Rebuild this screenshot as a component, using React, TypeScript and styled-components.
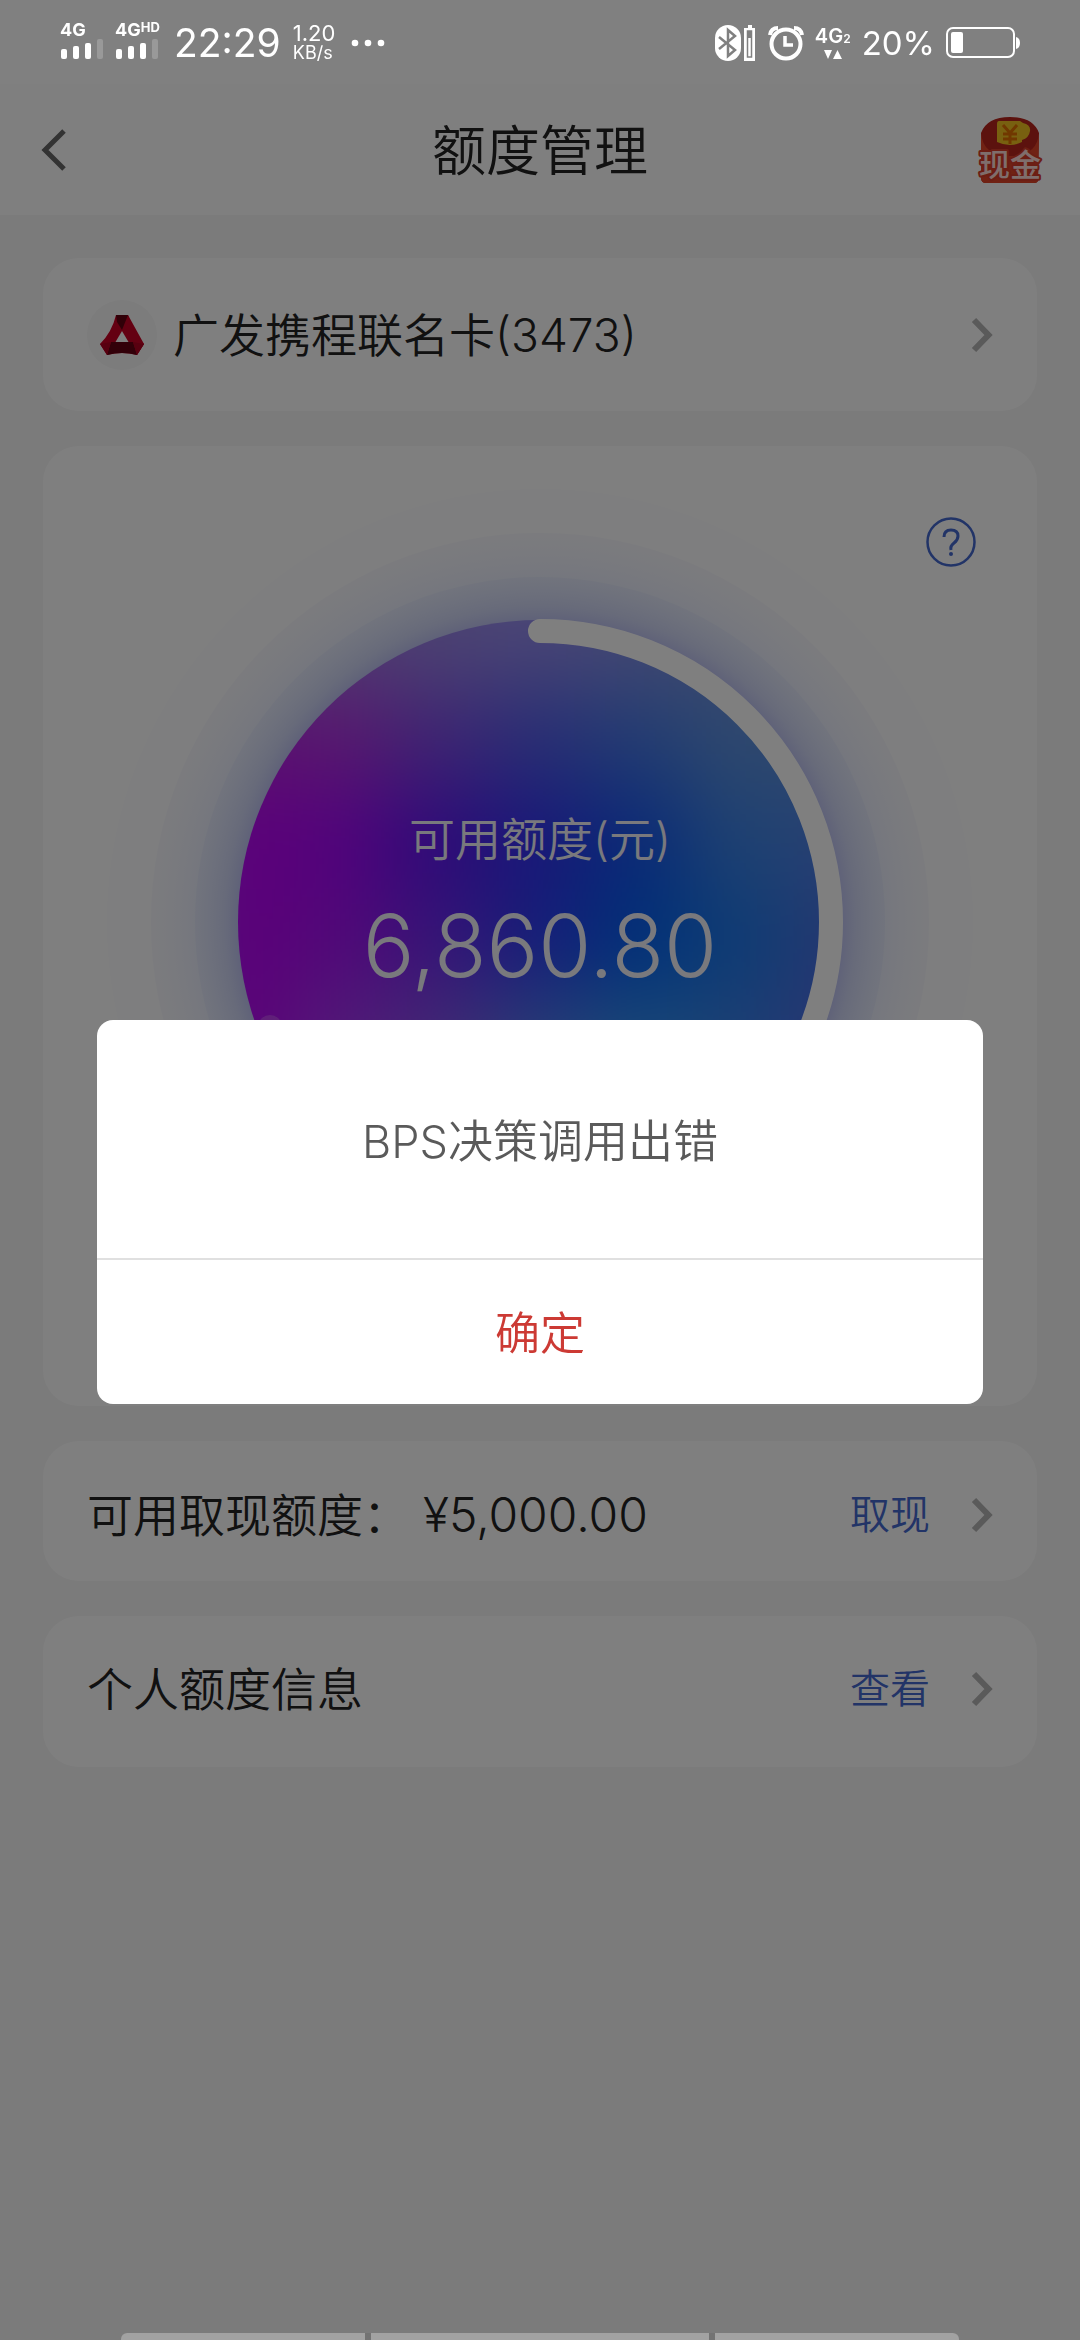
import React from 'react';
import styled, { createGlobalStyle } from 'styled-components';

const GlobalStyle = createGlobalStyle`
  *, *::before, *::after { box-sizing: border-box; }
  body {
    margin: 0;
    background: #f7f7f7;
    font-family: Inter, 'Noto Sans CJK SC', sans-serif;
    font-weight: 350;
    color: #222;
  }
  button {
    margin: 0;
    padding: 0;
    border: 0;
    background: none;
    font: inherit;
    color: inherit;
    cursor: pointer;
  }
  h1, p { margin: 0; font-weight: inherit; }
  svg { display: block; flex: none; }
`;

const STATUS_HEIGHT = '84px';

const Page = styled.div`
  min-height: 100vh;
  display: flex;
  flex-direction: column;
  padding-top: ${STATUS_HEIGHT};
`;

const StatusBar = styled.div`
  position: fixed;
  inset: 0 0 auto 0;
  z-index: 3;
  height: ${STATUS_HEIGHT};
  padding: 2px 60px 0;
  display: flex;
  align-items: center;
  justify-content: space-between;
  background: #808080;
  color: #fff;
  font-weight: 400;
`;

const StatusGroup = styled.div<{ $gap: number }>`
  display: flex;
  align-items: center;
  gap: ${(p) => p.$gap}px;
`;

const Signal = styled.div<{ $width: number }>`
  width: ${(p) => p.$width}px;
  padding-bottom: 6px;
`;

const SignalType = styled.div`
  display: flex;
  align-items: flex-start;
  font-size: 18px;
  line-height: 18px;
  font-weight: 700;
  small { font-size: 13px; line-height: 13px; }
`;

const Clock = styled.time`
  font-size: 39px;
  line-height: 48px;
`;

const Speed = styled.div`
  display: flex;
  flex-direction: column;
  font-size: 22px;
  line-height: 20px;
  small { font-size: 18px; line-height: 20px; }
`;

const DataType = styled.div`
  display: flex;
  flex-direction: column;
  align-items: center;
  gap: 4px;
  font-size: 20px;
  line-height: 20px;
  font-weight: 600;
  sub { font-size: 12px; line-height: 12px; vertical-align: 0; }
`;

const Percent = styled.span`
  font-size: 33px;
  line-height: 40px;
`;

const Header = styled.header`
  display: grid;
  grid-template-columns: 80px 1fr 80px;
  align-items: center;
  height: 131px;
  padding: 0 36px;
  background: #fff;
`;

const Title = styled.h1`
  padding-top: 4px;
  text-align: center;
  font-size: 54px;
  line-height: 64px;
`;

const HeaderButton = styled.button<{ $end?: boolean }>`
  display: flex;
  align-items: center;
  justify-content: ${(p) => (p.$end ? 'flex-end' : 'flex-start')};
  height: 80px;
`;

const Main = styled.main`
  display: flex;
  flex-direction: column;
  gap: 35px;
  padding: 43px;
`;

const RowCard = styled.button<{ $height: number; $padding: string }>`
  display: flex;
  align-items: center;
  min-height: ${(p) => p.$height}px;
  padding: ${(p) => p.$padding};
  border-radius: 36px;
  background: #fff;
  text-align: left;
  font-size: 46px;
  line-height: 56px;
`;

const BankLogo = styled.span`
  display: grid;
  place-items: center;
  width: 70px;
  height: 70px;
  margin-right: 16px;
  border-radius: 50%;
  background: #f8f8f8;
`;

const RowLabel = styled.span`
  flex: 1;
  display: flex;
  gap: 14px;
`;

const Amount = styled.span`
  font-size: 48px;
`;

const RowAction = styled.span`
  margin-right: 41px;
  font-size: 40px;
  line-height: 48px;
  color: #4468cf;
`;

const Panel = styled.section`
  position: relative;
  display: flex;
  justify-content: center;
  padding: 43px 0 51px;
  border-radius: 36px;
  background: #fff;
`;

const HelpButton = styled.button`
  position: absolute;
  top: 71px;
  right: 61px;
`;

const Gauge = styled.div`
  display: grid;
  > * { grid-area: 1 / 1; }
`;

const GaugeText = styled.div`
  display: flex;
  flex-direction: column;
  align-items: center;
  gap: 29px;
  padding-top: 322px;
  color: #f2f2fa;
`;

const GaugeLabel = styled.p`
  font-size: 46px;
  line-height: 56px;
`;

const GaugeValue = styled.p`
  font-size: 86px;
  line-height: 100px;
`;

const Overlay = styled.div`
  position: fixed;
  inset: ${STATUS_HEIGHT} 0 0 0;
  z-index: 2;
  display: flex;
  align-items: center;
  justify-content: center;
  background: rgba(0, 0, 0, 0.5);
`;

const Dialog = styled.div`
  width: 82%;
  overflow: hidden;
  border-radius: 16px;
  background: #fff;
  text-align: center;
  font-size: 45px;
  line-height: 56px;
`;

const Message = styled.p`
  padding: 94px 40px 88px;
  color: #5a5a5a;
`;

const Confirm = styled.button`
  width: 100%;
  padding: 46px 0 42px;
  border-top: 2px solid #e0e0e0;
  color: #cc3a34;
`;

const NavPeek = styled.div`
  position: fixed;
  inset: auto 121px 0 121px;
  z-index: 3;
  height: 7px;
  display: grid;
  grid-template-columns: 244fr 338fr 244fr;
  gap: 6px;
  overflow: hidden;
  border-radius: 6px 6px 0 0;
  background: #737373;
`;

const NavSegment = styled.span`
  background: #a2a2a2;
`;

function SignalBars() {
  return (
    <svg width="44" height="20" viewBox="0 0 44 20" fill="#fff">
      <rect x="1" y="10" width="6" height="10" rx="2" />
      <rect x="13" y="7" width="6" height="13" rx="2" />
      <rect x="25" y="4" width="6" height="16" rx="2" />
      <rect x="37" y="0" width="6" height="20" rx="2" opacity="0.2" />
    </svg>
  );
}

function Chevron() {
  return (
    <svg width="22" height="36" viewBox="0 0 22 36" fill="none" stroke="#b4b4b4" strokeWidth="6">
      <path d="M3 3l14.500 15L3 33" />
    </svg>
  );
}

// Colour mesh of the disc, one entry per 100px tile, softened by a blur.
const MESH = [
  ['#a870e8', '#a474e4', '#9c8ce8', '#a49cf0', '#8c98ec', '#7894dc', '#7894dc'],
  ['#a870e8', '#a474e4', '#9884e4', '#9088ec', '#8490e4', '#7894dc', '#7894dc'],
  ['#b820e0', '#b030dc', '#7c48e4', '#505ce8', '#4478e4', '#5c90dc', '#6090dc'],
  ['#bc00f4', '#a404f8', '#5c14f0', '#3030f0', '#1454ec', '#3c84e4', '#5080e4'],
  ['#b800f4', '#a410f0', '#6c28ec', '#2c3cf0', '#0060f0', '#1c78e8', '#4870e0'],
  ['#b800f0', '#a434f0', '#8450e8', '#5078ec', '#3090f0', '#3880e8', '#5068e4'],
  ['#b800f0', '#a434f0', '#8450e8', '#5080ec', '#3098f0', '#3880e8', '#5068e4'],
];

function QuotaRing() {
  return (
    <svg width="866" height="866" viewBox="0 0 866 866">
      <defs>
        <clipPath id="disc"><circle cx="433" cy="433" r="302" /></clipPath>
        <filter
          id="soft"
          filterUnits="userSpaceOnUse"
          x="0"
          y="0"
          width="866"
          height="866"
          colorInterpolationFilters="sRGB"
        >
          <feGaussianBlur stdDeviation="40" />
        </filter>
        <radialGradient id="glow" gradientUnits="userSpaceOnUse" cx="433" cy="433" r="385">
          <stop offset="0.77" stopColor="#8c90e8" stopOpacity="0.55" />
          <stop offset="0.82" stopColor="#98a4e8" stopOpacity="0.35" />
          <stop offset="0.89" stopColor="#a8b8f4" stopOpacity="0.16" />
          <stop offset="1" stopColor="#c8d0ff" stopOpacity="0" />
        </radialGradient>
      </defs>
      <circle cx="433" cy="433" r="433" fill="#fcfcfe" />
      <circle cx="433" cy="433" r="389" fill="#f6f7fd" />
      <circle cx="433" cy="433" r="345" fill="#edf0fb" />
      <circle cx="433" cy="433" r="385" fill="url(#glow)" />
      <g clipPath="url(#disc)">
        <g filter="url(#soft)">
          <rect width="866" height="866" fill="#8060f0" />
          {MESH.map((row, y) =>
            row.map((fill, x) => (
              <rect key={`${x}-${y}`} x={80 + x * 100} y={y * 100} width="101" height="101" fill={fill} />
            )),
          )}
        </g>
      </g>
      <circle cx="163" cy="538" r="12" fill="#fff" fillOpacity="0.2" />
      <path
        d="M433 142A291 291 0 1 1 433 724"
        fill="none"
        stroke="#fff"
        strokeWidth="24"
        strokeLinecap="round"
      />
    </svg>
  );
}

function BankMark() {
  return (
    <svg width="46" height="42" viewBox="0 0 46 42">
      <path d="M17 1H29L45 30L38 41Q23 37 8 41L1 30Q13 18 17 1Z" fill="#c80024" />
      <path d="M29 1Q33 18 45 30L38 41L29.500 28L23 16Z" fill="#c80024" />
      <path d="M17 1H29L23 16L18 8Z" fill="#600010" />
      <path d="M12 28H34L38 41Q23 37 8 41Z" fill="#640012" />
      <path d="M1 30L12 28L8 41Z" fill="#b00020" />
      <path d="M45 30L34 28L38 41Z" fill="#b00020" />
      <path d="M23 17L29.500 28H16.500Z" fill="#fff" />
    </svg>
  );
}

function CashBadge() {
  return (
    <svg width="68" height="72" viewBox="0 -2 68 72">
      <path d="M5 17Q11 1 34 1T63 17L62 64Q62 67 58 67H10Q5 67 5 62Z" fill="#b8241c" />
      <path d="M5 17Q7 40 34 40T63 17L62 64Q62 67 58 67H10Q5 67 5 62Z" fill="#e04428" />
      <path d="M23 5H44L47 7Q55 9 54 15Q53 22 46 24V26Q34 32 21 26V8Q21 5 23 5Z" fill="#f0c020" />
      <path d="M27 9L34 17L41 9M34 17V28M27 18H41M27 23H41" fill="none" stroke="#e07000" strokeWidth="3" />
      <text
        x="34"
        y="60"
        textAnchor="middle"
        fontSize="31"
        fontWeight="500"
        fontFamily="'Noto Sans CJK SC', sans-serif"
        fill="#ffdcd8"
        stroke="#d83c28"
        strokeWidth="4"
        strokeLinejoin="round"
        paintOrder="stroke"
      >
        现金
      </text>
    </svg>
  );
}

export default function App() {
  return (
    <>
      <GlobalStyle />
      <StatusBar>
        <StatusGroup $gap={12}>
          <StatusGroup $gap={11}>
            <Signal $width={44}>
              <SignalType>4G</SignalType>
              <SignalBars />
            </Signal>
            <Signal $width={47}>
              <SignalType>4G<small>HD</small></SignalType>
              <SignalBars />
            </Signal>
          </StatusGroup>
          <Clock>22:29</Clock>
          <Speed><span>1.20</span><small>KB/s</small></Speed>
          <svg width="42" height="8" viewBox="-4 0 42 8" fill="#fff">
            <circle cx="4" cy="4" r="3.300" />
            <circle cx="17" cy="4" r="3.300" />
            <circle cx="30" cy="4" r="3.300" />
          </svg>
        </StatusGroup>
        <StatusGroup $gap={11}>
          <svg width="42" height="36" viewBox="0 0 42 36">
            <rect x="0" y="0" width="26" height="36" rx="13" fill="#fff" />
            <path d="M4 12L20 25L13 31V5L20 11L4 24" fill="none" stroke="#808080" strokeWidth="2.500" />
            <path d="M33 0H37V3H40V36H29V3H33Z" fill="#fff" />
            <rect x="32.500" y="6" width="4" height="26" fill="none" stroke="#808080" strokeWidth="1.500" />
            <rect x="33" y="6" width="3" height="7" fill="#808080" />
          </svg>
          <svg width="36" height="36" viewBox="0 0 36 36" fill="none" stroke="#fff">
            <circle cx="18" cy="19" r="14.500" strokeWidth="4" />
            <path d="M17 11V20H25" strokeWidth="3.500" />
            <path d="M2 10Q3 3 10 3M26 3Q33 3 34 10" strokeWidth="4" />
          </svg>
          <DataType>
            <span>4G<sub>2</sub></span>
            <svg width="18" height="10" viewBox="0 0 18 10" fill="#fff">
              <path d="M0 0H8L4 9ZM9 9H18L13.500 0Z" />
            </svg>
          </DataType>
          <Percent>20%</Percent>
          <svg width="74" height="32" viewBox="0 0 74 32">
            <rect x="1" y="1" width="67" height="29" rx="6" fill="none" stroke="#fff" strokeWidth="2" />
            <path d="M70 10Q74 11 74 16T70 22Z" fill="#fff" />
            <rect x="5" y="5" width="12" height="21" rx="2" fill="#fff" />
          </svg>
        </StatusGroup>
      </StatusBar>

      <Page>
        <Header>
          <HeaderButton aria-label="返回">
            <svg width="36" height="44" viewBox="0 0 36 44" fill="none" stroke="#666" strokeWidth="5">
              <path d="M28 3L9 22L28 41" />
            </svg>
          </HeaderButton>
          <Title>额度管理</Title>
          <HeaderButton $end aria-label="现金">
            <CashBadge />
          </HeaderButton>
        </Header>

        <Main>
          <RowCard $height={153} $padding="0 44px">
            <BankLogo><BankMark /></BankLogo>
            <RowLabel>广发携程联名卡(3473)</RowLabel>
            <Chevron />
          </RowCard>

          <Panel>
            <Gauge>
              <QuotaRing />
              <GaugeText>
                <GaugeLabel>可用额度(元)</GaugeLabel>
                <GaugeValue>6,860.80</GaugeValue>
              </GaugeText>
            </Gauge>
            <HelpButton aria-label="帮助">
              <svg width="50" height="50" viewBox="0 0 50 50" fill="none" stroke="#4468cf">
                <circle cx="25" cy="25" r="23.500" strokeWidth="2.500" />
                <path d="M18 20Q18 13 25 13T32 19Q32 23 28 26T25 33" strokeWidth="3" />
                <circle cx="25" cy="37" r="2" fill="#4468cf" stroke="none" />
              </svg>
            </HelpButton>
          </Panel>

          <RowCard $height={140} $padding="8px 44px 0">
            <RowLabel><span>可用取现额度：</span><Amount>¥5,000.00</Amount></RowLabel>
            <RowAction>取现</RowAction>
            <Chevron />
          </RowCard>

          <RowCard $height={151} $padding="0 44px 6px">
            <RowLabel>个人额度信息</RowLabel>
            <RowAction>查看</RowAction>
            <Chevron />
          </RowCard>
        </Main>
      </Page>

      <Overlay>
        <Dialog role="alertdialog" aria-modal="true" aria-labelledby="dialog-message">
          <Message id="dialog-message">BPS决策调用出错</Message>
          <Confirm>确定</Confirm>
        </Dialog>
      </Overlay>

      <NavPeek>
        <NavSegment />
        <NavSegment />
        <NavSegment />
      </NavPeek>
    </>
  );
}
